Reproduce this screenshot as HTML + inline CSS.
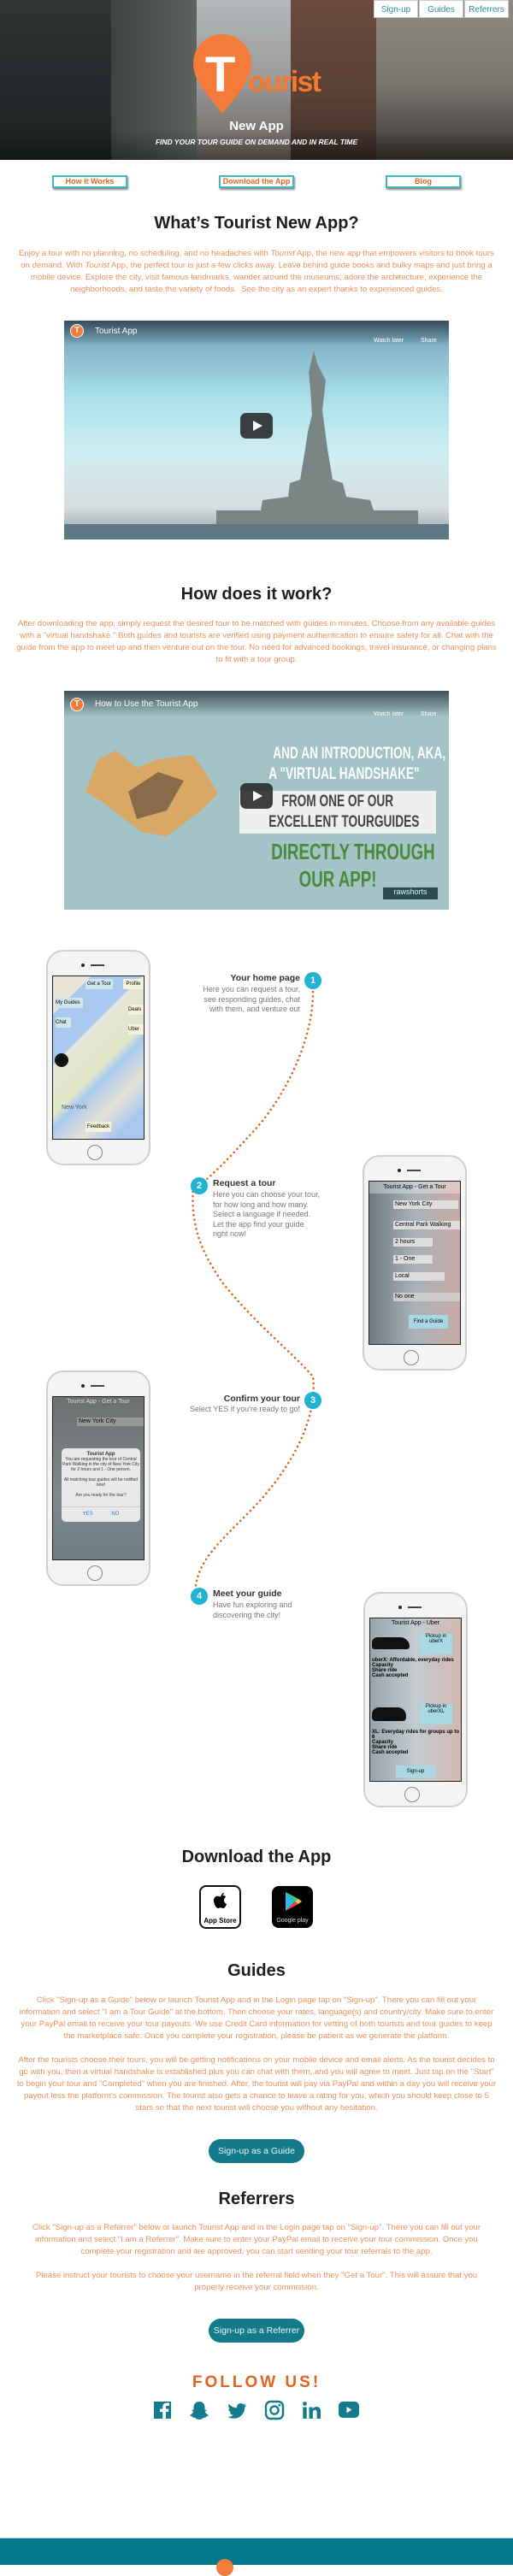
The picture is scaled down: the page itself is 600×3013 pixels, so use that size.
<!DOCTYPE html>
<html><head><meta charset="utf-8"><style>
*{box-sizing:border-box;margin:0;padding:0}
body{width:600px;height:3000px;position:relative;background:#fff;font-family:"Liberation Sans",sans-serif;overflow:hidden}
.a{position:absolute}
.hero{left:0;top:0;width:600px;height:187px;overflow:hidden;background:linear-gradient(90deg,#2a2f30 0%,#3b4040 20%,#5d625f 38%,#8d8f90 48%,#7a5d4e 58%,#5b4a40 70%,#8a8078 85%,#6a6560 100%)}
.nav{top:0;height:21px;background:#fff;color:#2e8d9e;font-size:10px;text-align:center;line-height:21px;border:1px solid #ccc}
.btn{top:205px;width:88px;height:15px;border:2px solid #3fb6c0;box-shadow:1px 2px 2px #888;color:#e06a1c;font-weight:bold;font-size:9px;text-align:center;line-height:11px;background:#fff}
h2{position:absolute;left:0;width:600px;text-align:center;font-size:20px;color:#1e1e1e;font-weight:bold}
.p{position:absolute;left:18px;width:564px;text-align:center;font-size:9.6px;line-height:14px;color:#e8925a}
.vid{left:75px;width:450px;height:256px;overflow:hidden}
.play{position:absolute;left:206px;top:108px;width:38px;height:30px;background:#212121;opacity:.85;border-radius:7px}
.play:after{content:"";position:absolute;left:15px;top:9px;border-left:11px solid #fff;border-top:6px solid transparent;border-bottom:6px solid transparent}
.phone{width:122px;height:252px;border:2px solid #cfcfcf;border-radius:20px;background:#f4f4f4}
.scr{position:absolute;left:5px;top:28px;width:108px;height:192px;border:1px solid #222}
.home{position:absolute;left:46px;top:226px;width:18px;height:18px;border:1px solid #888;border-radius:50%}
.spk{position:absolute;left:50px;top:15px;width:16px;height:2px;background:#444}
.cam{position:absolute;left:39px;top:14px;width:4px;height:4px;background:#222;border-radius:50%}
.num{width:20px;height:20px;border-radius:50%;background:#1fb3d4;color:#fff;font-size:11px;font-weight:bold;text-align:center;line-height:20px}
.st{font-size:10.5px;font-weight:bold;color:#333}
.sd{font-size:9px;line-height:11.5px;color:#777}
.pill{left:244px;width:112px;height:28px;border-radius:14px;background:#137b8b;color:#e8f4f6;font-size:10.5px;text-align:center;line-height:28px}
.cond{display:inline-block;transform:scaleX(.72);transform-origin:center;white-space:nowrap}
</style></head><body>

<div class="a hero">
 <div class="a" style="left:0;top:0;width:130px;height:187px;background:linear-gradient(180deg,#2f3434,#23292a 60%,#1e2222)"></div>
 <div class="a" style="left:230px;top:0;width:110px;height:187px;background:linear-gradient(180deg,#b4b8bb,#9a9a98 50%,#6a6462)"></div>
 <div class="a" style="left:440px;top:0;width:160px;height:187px;background:linear-gradient(180deg,#8e8a83,#7c7670 50%,#3d3a36)"></div>
 <div class="a" style="left:340px;top:0;width:100px;height:187px;background:linear-gradient(180deg,#6b4a3c,#5a4035 60%,#3a2e2a)"></div>
 <div class="a" style="left:0;top:150px;width:600px;height:37px;background:linear-gradient(180deg,rgba(0,0,0,0),rgba(0,0,0,.35))"></div>
 <svg class="a" style="left:0;top:0" width="600" height="187">
  <path d="M260 40 a34 34 0 0 1 34 34 c0 22 -18 38 -34 59 c-16 -21 -34 -37 -34 -59 a34 34 0 0 1 34 -34z" fill="#f47b3a"/>
  <text x="240" y="107" font-family="Liberation Sans" font-weight="bold" font-size="58" fill="#fff">T</text>
  <text x="290" y="107" font-family="Liberation Sans" font-weight="bold" font-size="34" fill="#f4782e" textLength="86">ourist</text>
  <text x="300" y="152" text-anchor="middle" font-family="Liberation Sans" font-weight="bold" font-size="15" fill="#fff">New App</text>
  <text x="300" y="169" text-anchor="middle" font-family="Liberation Sans" font-weight="bold" font-style="italic" font-size="8.5" fill="#fff">FIND YOUR TOUR GUIDE ON DEMAND AND IN REAL TIME</text>
 </svg>
</div>
<div class="a nav" style="left:437px;width:52px">Sign-up</div>
<div class="a nav" style="left:490px;width:52px">Guides</div>
<div class="a nav" style="left:543px;width:52px">Referrers</div>

<div class="a btn" style="left:61px">How it Works</div>
<div class="a btn" style="left:256px">Download the App</div>
<div class="a btn" style="left:451px">Blog</div>

<h2 style="top:250px">What’s Tourist New App?</h2>
<div class="p" style="top:290px">Enjoy a tour with no planning, no scheduling, and no headaches with <i>Tourist</i> App, the new app that empowers visitors to book tours on demand. With <i>Tourist</i> App, the perfect tour is just a few clicks away. Leave behind guide books and bulky maps and just bring a mobile device. Explore the city, visit famous landmarks, wander around the museums, adore the architecture, experience the neighborhoods, and taste the variety of foods.&nbsp; See the city as an expert thanks to experienced guides.</div>

<div class="a vid" style="top:375px;background:linear-gradient(180deg,#6fa0b8 0%,#a9dfea 35%,#cfeef2 60%,#d8dde0 85%,#8a9aa4 100%)">
 <div class="a" style="left:0;top:0;width:450px;height:30px;background:linear-gradient(180deg,rgba(30,40,50,.7),rgba(0,0,0,0))"></div>
 <div class="a" style="left:7px;top:4px;width:16px;height:16px;border-radius:50%;background:#f47b3a;border:1px solid #fff;color:#fff;font-size:10px;font-weight:bold;text-align:center;line-height:14px">T</div>
 <div class="a" style="left:36px;top:7px;color:#fff;font-size:10px">Tourist App</div>
 <div class="a" style="left:362px;top:20px;color:#fff;font-size:7px">Watch later</div>
 <div class="a" style="left:417px;top:20px;color:#fff;font-size:7px">Share</div>
 <svg class="a" style="left:0;top:0" width="450" height="256">
  <path d="M178 242 L178 222 L230 222 L232 210 L262 206 L264 190 L276 186 L282 150 L285 130 L290 110 L288 80 L286 60 L292 35 L296 50 L300 58 L306 70 L302 105 L308 150 L314 186 L326 190 L330 206 L358 210 L362 222 L414 222 L414 242 Z" fill="#7a8584"/>
  <rect x="0" y="238" width="450" height="18" fill="#5e7884"/>
 </svg>
 <div class="play"></div>
</div>

<h2 style="top:684px">How does it work?</h2>
<div class="p" style="top:723px">After downloading the app, simply request the desired tour to be matched with guides in minutes. Choose from any available guides with a "virtual handshake." Both guides and tourists are verified using payment authentication to ensure safety for all. Chat with the guide from the app to meet up and then venture out on the tour. No need for advanced bookings, travel insurance, or changing plans to fit with a tour group.</div>

<div class="a vid" style="top:808px;background:#a3c3c6">
 <div class="a" style="left:0;top:0;width:450px;height:30px;background:linear-gradient(180deg,rgba(30,40,50,.75),rgba(0,0,0,0))"></div>
 <div class="a" style="left:7px;top:8px;width:16px;height:16px;border-radius:50%;background:#f47b3a;border:1px solid #fff;color:#fff;font-size:10px;font-weight:bold;text-align:center;line-height:14px">T</div>
 <div class="a" style="left:36px;top:10px;color:#fff;font-size:10px">How to Use the Tourist App</div>
 <div class="a" style="left:362px;top:24px;color:#fff;font-size:7px">Watch later</div>
 <div class="a" style="left:417px;top:24px;color:#fff;font-size:7px">Share</div>
 <svg class="a" style="left:0;top:0" width="450" height="256">
  <path d="M25 118 L40 80 L60 70 L85 90 L110 80 L150 75 L165 95 L180 120 L160 140 L120 170 L90 165 L45 130 Z" fill="#d9a865"/>
  <path d="M75 118 L110 95 L140 105 L120 140 L85 150 Z" fill="#8a6a48"/>
 </svg>
 <div class="a" style="left:205px;top:62px;width:230px;text-align:center;color:#fff;font-size:19px;font-weight:bold;line-height:24px"><span class="cond">AND AN INTRODUCTION, AKA,</span><br><span class="cond">A "VIRTUAL HANDSHAKE"</span></div>
 <div class="a" style="left:205px;top:117px;width:230px;height:50px;background:#eef0ee;text-align:center;color:#444;font-size:19px;font-weight:bold;line-height:24px;padding-top:1px"><span class="cond">FROM ONE OF OUR</span><br><span class="cond">EXCELLENT TOURGUIDES</span></div>
 <div class="a" style="left:205px;top:172px;width:230px;text-align:center;color:#4a8a3a;font-size:26px;font-weight:bold;line-height:32px"><span class="cond">DIRECTLY THROUGH</span><br><span class="cond">OUR APP!</span></div>
 <div class="a" style="left:373px;top:230px;width:64px;height:14px;background:#2d4a52;color:#cfe;font-size:9px;text-align:center">rawshorts</div>
 <div class="play"></div>
</div>

<svg class="a" style="left:0;top:1140px" width="600" height="740">
 <path d="M366 20 C366 80 330 150 290 190 C250 235 225 255 226 247 C222 300 240 330 260 360 C300 410 340 440 366 470 C372 520 340 580 290 630 C250 670 228 690 228 727" fill="none" stroke="#e0651c" stroke-width="2.6" stroke-linecap="round" stroke-dasharray="0 5.5"/>
</svg>

<div class="a phone" style="left:54px;top:1111px"><div class="cam"></div><div class="spk"></div>
 <div class="scr" style="background:linear-gradient(135deg,#e9e4d6 0%,#e9e4d6 15%,#a9c8ef 15%,#a9c8ef 35%,#e8e5da 35%,#dfe7c8 55%,#a9c8ef 60%,#e6e2d6 75%,#a9c8ef 88%)">
  <div class="a" style="left:38px;top:3px;width:32px;height:12px;background:#cfe6ea;font-size:6px;line-height:12px;text-align:center">Get a Tour</div>
  <div class="a" style="left:82px;top:3px;width:24px;height:12px;background:#f6f3dc;font-size:6px;line-height:12px;text-align:center">Profile</div>
  <div class="a" style="left:3px;top:25px;width:32px;height:12px;background:#cfe6ea;font-size:6px;line-height:12px">My Guides</div>
  <div class="a" style="left:3px;top:48px;width:18px;height:12px;background:#cfe6ea;font-size:6px;line-height:12px">Chat</div>
  <div class="a" style="left:88px;top:33px;width:18px;height:12px;background:#f6f3dc;font-size:6px;line-height:12px">Deals</div>
  <div class="a" style="left:88px;top:56px;width:18px;height:12px;background:#f6f3dc;font-size:6px;line-height:12px">Uber</div>
  <div class="a" style="left:2px;top:90px;width:16px;height:16px;background:#111;border-radius:50%"></div>
  <div class="a" style="left:38px;top:170px;width:30px;height:12px;background:#f6f3dc;font-size:6px;line-height:12px;text-align:center">Feedback</div>
  <div class="a" style="left:10px;top:150px;font-size:7px;color:#555">New York</div>
 </div><div class="home"></div></div>
<div class="a num" style="left:356px;top:1137px">1</div>
<div class="a st" style="left:200px;top:1138px;width:151px;text-align:right">Your home page</div>
<div class="a sd" style="left:200px;top:1152px;width:151px;text-align:right">Here you can request a tour,<br>see responding guides, chat<br>with them, and venture out</div>

<div class="a num" style="left:223px;top:1377px">2</div>
<div class="a st" style="left:249px;top:1378px">Request a tour</div>
<div class="a sd" style="left:249px;top:1392px;width:140px">Here you can choose your tour,<br>for how long and how many.<br>Select a language if needed.<br>Let the app find your guide<br>right now!</div>
<div class="a phone" style="left:424px;top:1351px"><div class="cam"></div><div class="spk"></div>
 <div class="scr" style="background:linear-gradient(90deg,#6f7a80,#a9b3b8 50%,#c9aaa8);font-size:7px">
  <div class="a" style="left:0;top:0;width:106px;height:14px;background:rgba(255,255,255,.35);text-align:center;line-height:14px">Tourist App - Get a Tour</div>
  <div class="a" style="left:28px;top:22px;width:76px;height:10px;background:#ddd;line-height:10px">&nbsp;New York City</div>
  <div class="a" style="left:28px;top:46px;width:78px;height:10px;background:#ddd;line-height:10px">&nbsp;Central Park Walking</div>
  <div class="a" style="left:28px;top:66px;width:46px;height:10px;background:#ddd;line-height:10px">&nbsp;2 hours</div>
  <div class="a" style="left:28px;top:86px;width:46px;height:10px;background:#ddd;line-height:10px">&nbsp;1 - One</div>
  <div class="a" style="left:28px;top:106px;width:60px;height:10px;background:#ddd;line-height:10px">&nbsp;Local</div>
  <div class="a" style="left:28px;top:130px;width:78px;height:10px;background:#ccc;line-height:10px">&nbsp;No one</div>
  <div class="a" style="left:46px;top:156px;width:46px;height:16px;background:#a8d8e4;line-height:16px;text-align:center;font-size:6px">Find a Guide</div>
 </div><div class="home"></div></div>

<div class="a phone" style="left:54px;top:1603px"><div class="cam"></div><div class="spk"></div>
 <div class="scr" style="background:linear-gradient(180deg,#6c6f70,#7f8a8c 60%,#6f7d82);font-size:7px">
  <div class="a" style="left:0;top:2px;width:106px;text-align:center;color:#ddd">Tourist App - Get a Tour</div>
  <div class="a" style="left:28px;top:24px;width:78px;height:10px;background:#999;line-height:10px">&nbsp;New York City</div>
  <div class="a" style="left:10px;top:60px;width:92px;height:86px;background:#e9e9e9;border-radius:5px;text-align:center;font-size:5px;color:#333;padding-top:4px">
   <b style="font-size:6px">Tourist App</b><br>You are requesting the tour of Central Park Walking in the city of New York City for 2 hours and 1 - One person.<br><br>All matching tour guides will be notified now!<br><br>Are you ready for the tour?
   <div class="a" style="left:0;top:68px;width:92px;border-top:1px solid #ccc;color:#2a7ae2;font-size:6px;line-height:16px">YES &nbsp; &nbsp; &nbsp; &nbsp; &nbsp; &nbsp; NO</div></div>
 </div><div class="home"></div></div>
<div class="a num" style="left:356px;top:1628px">3</div>
<div class="a st" style="left:200px;top:1630px;width:151px;text-align:right">Confirm your tour</div>
<div class="a sd" style="left:180px;top:1643px;width:171px;text-align:right">Select YES if you're ready to go!</div>

<div class="a num" style="left:223px;top:1857px">4</div>
<div class="a st" style="left:249px;top:1858px">Meet your guide</div>
<div class="a sd" style="left:249px;top:1872px">Have fun exploring and<br>discovering the city!</div>
<div class="a phone" style="left:425px;top:1862px"><div class="cam"></div><div class="spk"></div>
 <div class="scr" style="background:linear-gradient(90deg,#9aa5ab,#c2cbcf 50%,#d4b8b2);font-size:6px">
  <div class="a" style="left:0;top:2px;width:106px;text-align:center;font-size:7px">Tourist App - Uber</div>
  <div class="a" style="left:2px;top:22px;width:44px;height:14px;background:#111;border-radius:8px 14px 4px 4px"></div>
  <div class="a" style="left:58px;top:18px;width:38px;height:24px;background:#a8d8e4;text-align:center">Pickup in uberX</div>
  <div class="a" style="left:2px;top:46px;font-weight:bold">uberX: Affordable, everyday rides<br>Capacity<br>Share ride<br>Cash accepted</div>
  <div class="a" style="left:2px;top:104px;width:40px;height:16px;background:#111;border-radius:8px 10px 4px 4px"></div>
  <div class="a" style="left:58px;top:100px;width:38px;height:24px;background:#a8d8e4;text-align:center">Pickup in uberXL</div>
  <div class="a" style="left:2px;top:130px;font-weight:bold">XL: Everyday rides for groups up to 6<br>Capacity<br>Share ride<br>Cash accepted</div>
  <div class="a" style="left:30px;top:172px;width:46px;height:14px;background:#a8d8e4;text-align:center;line-height:14px">Sign-up</div>
 </div><div class="home"></div></div>

<h2 style="top:2161px">Download the App</h2>
<div class="a" style="left:233px;top:2205px;width:49px;height:51px;border:2px solid #111;border-radius:8px;background:#fff;text-align:center">
 <svg width="26" height="28" viewBox="0 0 24 28" style="margin-top:3px"><path d="M16 4c-1.5 0-3 1.2-3.2 3 1.6.1 3.1-1.2 3.2-3zM12 8.5c-1.2 0-2.2-.8-3.6-.8C6 7.7 4 9.7 4 13c0 4.2 3 9 5 9 1.2 0 1.6-.7 3-.7s1.7.7 3 .7c1.8 0 3.5-3 4-5-2-.8-3-2.6-3-4.5 0-1.8 1-3 2.2-3.8-1-1.3-2.4-1.8-3.7-1.8-1.3 0-2.3.6-2.5.6z" fill="#000"/></svg>
 <div style="font-size:8px;line-height:8px;font-weight:bold">App Store</div></div>
<div class="a" style="left:318px;top:2206px;width:48px;height:49px;border-radius:8px;background:#000;text-align:center">
 <svg width="28" height="28" viewBox="0 0 28 28" style="margin-top:4px"><path d="M6 3 L6 25 L17 14Z" fill="#2fb7e8"/><path d="M6 3 L21 11 L17 14Z" fill="#3ad07a"/><path d="M6 25 L21 17 L17 14Z" fill="#e8453a"/><path d="M21 11 L25 14 L21 17 L17 14Z" fill="#f8c330"/></svg>
 <div style="font-size:7px;color:#ddd">Google play</div></div>

<h2 style="top:2294px">Guides</h2>
<div class="p" style="top:2333px">Click "Sign-up as a Guide" below or launch Tourist App and in the Login page tap on "Sign-up". There you can fill out your information and select "I am a Tour Guide" at the bottom. Then choose your rates, language(s) and country/city. Make sure to enter your PayPal email to receive your tour payouts. We use Credit Card information for vetting of both tourists and tour guides to keep the marketplace safe. Once you complete your registration, please be patient as we generate the platform.</div>
<div class="p" style="top:2403px">After the tourists choose their tours, you will be getting notifications on your mobile device and email alerts. As the tourist decides to go with you, then a virtual handshake is established plus you can chat with them, and you will agree to meet. Just tap on the "Start" to begin your tour and "Completed" when you are finished. After, the tourist will pay via PayPal and within a day you will receive your payout less the platform's commission. The tourist also gets a chance to leave a rating for you, which you should keep close to 5 stars so that the next tourist will choose you without any hesitation.</div>
<div class="a pill" style="top:2502px">Sign-up as a Guide</div>

<h2 style="top:2561px">Referrers</h2>
<div class="p" style="top:2599px;left:28px;width:544px">Click "Sign-up as a Referrer" below or launch Tourist App and in the Login page tap on "Sign-up". There you can fill out your information and select "I am a Referrer". Make sure to enter your PayPal email to receive your tour commission. Once you complete your registration and are approved, you can start sending your tour referrals to the app.</div>
<div class="p" style="top:2655px;left:28px;width:544px">Please instruct your tourists to choose your username in the referral field when they "Get a Tour". This will assure that you properly receive your commission.</div>
<div class="a pill" style="top:2712px">Sign-up as a Referrer</div>

<div class="a" style="left:0;top:2776px;width:600px;text-align:center;color:#e0651c;font-size:19px;font-weight:bold;letter-spacing:3px">FOLLOW US!</div>
<svg class="a" style="left:0;top:2807px" width="600" height="26" fill="#137b8b">
 <path d="M180 2h20v20h-6v-8h3l.5-3.5H194V8.5c0-1 .4-1.7 1.8-1.7H198V3.7c-.4 0-1.6-.2-3-.2-3 0-4.8 1.8-4.8 5v2H187V14h3.2v8H180z"/>
 <path d="M233 2c-4 0-6.5 3-6.5 6.5v3l-2 .5c0 1 1.5 1.3 1.8 1.6-.8 2-3 3.8-4.3 4.2 0 1 2 1.3 2.8 1.6.3 1 .5 1.4 1.6 1.300 2-.3 3 2.3 6.6 2.3s4.6-2.6 6.6-2.3c1.1.1 1.3-.3 1.6-1.3.8-.3 2.8-.6 2.8-1.6-1.3-.4-3.5-2.2-4.3-4.2.3-.3 1.8-.6 1.8-1.6l-2-.5v-3C239.5 5 237 2 233 2z"/>
 <path d="M288 6c-.8.4-1.6.6-2.5.7.9-.6 1.6-1.4 1.900-2.4-.9.5-1.800.9-2.800 1.100-1.700-1.900-4.700-1.900-6.400-.1-1.100 1.100-1.500 2.700-1.200 4.200-3.600-.2-6.900-1.900-9.200-4.700-1.200 2-.6 4.600 1.400 5.900-.7 0-1.400-.2-2-.5 0 2.100 1.500 3.900 3.600 4.400-.7.2-1.400.2-2 .1.6 1.800 2.300 3 4.200 3.100-1.900 1.500-4.300 2.200-6.700 1.900 2.100 1.300 4.500 2 7 2 8.400 0 13-7 13-13v-.6c.9-.6 1.600-1.400 2.200-2.200z"/>
 <rect x="311" y="2" width="20" height="20" rx="5.5" fill="none" stroke="#137b8b" stroke-width="2.4"/><circle cx="321" cy="12" r="4.6" fill="none" stroke="#137b8b" stroke-width="2.4"/><circle cx="326.8" cy="6.2" r="1.3"/>
 <circle cx="356.5" cy="4.5" r="2.4"/><rect x="354.3" y="8.5" width="4.4" height="13.5"/><path d="M361.5 8.5h4.2v2c.8-1.4 2.4-2.4 4.6-2.4 3.6 0 4.7 2.3 4.7 5.6V22h-4.4v-7.4c0-1.7-.4-2.9-2.1-2.9-1.8 0-2.6 1.3-2.6 3V22h-4.4z"/>
 <rect x="396" y="2" width="24" height="19" rx="5"/><path d="M405.5 8l6 3.6-6 3.6z" fill="#fff"/>
</svg>

<div class="a" style="left:0;top:2968px;width:600px;height:32px;background:#02798b;border-top:1px solid #9fe0ea"></div>
<div class="a" style="left:253px;top:2993px;width:20px;height:20px;border-radius:50%;background:#f47b3a"></div>
</body></html>
